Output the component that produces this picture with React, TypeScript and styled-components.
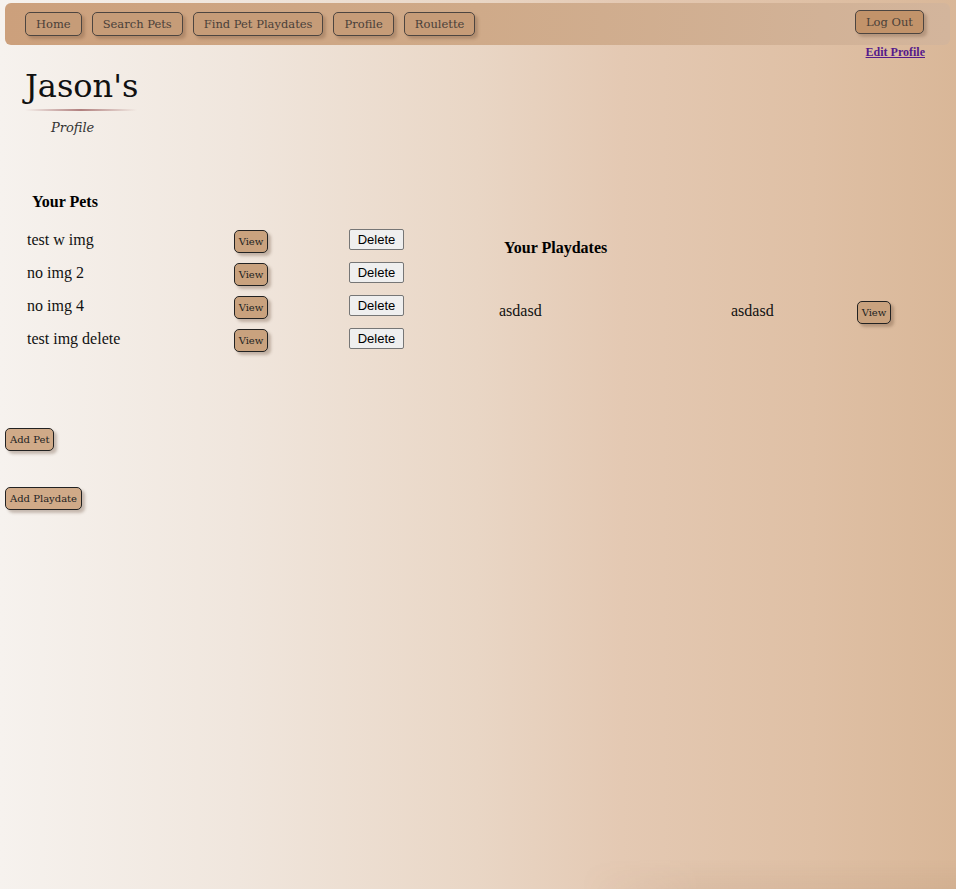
import React from "react";
import styled, { createGlobalStyle } from "styled-components";

const Global = createGlobalStyle`
  html, body { margin: 0; padding: 0; }
  body { font-family: "Liberation Serif", "Times New Roman", serif; }
`;

const Page = styled.div`
  min-height: 889px;
  box-sizing: border-box;
  padding-top: 3px;
  background: linear-gradient(90deg, #f6f2ee 0%, #f0e6dd 25%, #e9d6c5 50%, #e4c9b3 65%, #dfc0a5 85%, #d9b798 100%);
  position: relative;
  overflow: hidden;
`;

const BottomShade = styled.div`
  position: absolute;
  left: 580px;
  right: 0;
  bottom: 0;
  height: 30px;
  background: linear-gradient(180deg, rgba(120, 80, 50, 0) 0%, rgba(120, 80, 50, 0.07) 100%);
  -webkit-mask-image: linear-gradient(90deg, transparent 0%, black 120px);
  mask-image: linear-gradient(90deg, transparent 0%, black 120px);
  pointer-events: none;
`;

const Nav = styled.nav`
  margin: 0 6px 0 5px;
  height: 42px;
  border-radius: 6px;
  background: linear-gradient(90deg, #cca07c 0%, #cfaa89 50%, #d3b59c 100%);
  display: flex;
  align-items: center;
  padding: 0 26px 0 20px;
  gap: 10px;
  box-sizing: border-box;
`;

const NavButton = styled.button<{ $right?: boolean }>`
  font-family: "DejaVu Serif", "Liberation Serif", serif;
  font-size: 11.5px;
  color: #4a4038;
  height: 24px;
  padding: 0 10px;
  background: ${(p) => (p.$right ? "#c2936a" : "#c69c78")};
  border: 1px solid #4d4540;
  border-radius: 5px;
  box-shadow: 3px 3px 3px rgba(90, 60, 40, 0.25);
  margin-left: ${(p) => (p.$right ? "auto" : "0")};
  margin-top: ${(p) => (p.$right ? "-4px" : "0")};
  cursor: pointer;
`;

const EditRow = styled.div`
  display: flex;
  justify-content: flex-end;
  padding-right: 31px;
  height: 16px;
`;

const EditLink = styled.a`
  font-family: "Liberation Serif", serif;
  font-weight: bold;
  font-size: 12px;
  color: #551a8b;
  text-decoration: underline;
  line-height: 14px;
`;

const Header = styled.header`
  padding-left: 25px;
  margin-top: 5px;
  width: 112px;
`;

const Title = styled.h1`
  margin: 0;
  font-family: "DejaVu Serif", serif;
  font-weight: normal;
  font-size: 32px;
  color: #111;
  line-height: 40px;
  white-space: nowrap;
`;

const Rule = styled.div`
  height: 2px;
  margin-top: 3px;
  width: 112px;
  background: linear-gradient(90deg, rgba(160, 100, 90, 0) 0%, rgba(160, 100, 100, 0.8) 50%, rgba(160, 100, 90, 0) 100%);
`;

const Subtitle = styled.div`
  font-family: "DejaVu Serif", serif;
  font-style: italic;
  font-size: 13px;
  color: #333;
  margin-top: 9px;
  padding-left: 26px;
`;

const Content = styled.div`
  display: flex;
  margin-top: 57px;
`;

const PetsCol = styled.section`
  width: 499px;
`;

const SectionTitle = styled.h2<{ $indent: number }>`
  margin: 0;
  font-family: "Liberation Serif", serif;
  font-weight: bold;
  font-size: 16px;
  line-height: 20px;
  padding-left: ${(p) => p.$indent}px;
`;

const PetList = styled.div`
  margin-top: 13px;
  padding-left: 27px;
  display: grid;
  grid-template-columns: 207px 115px auto;
  grid-auto-rows: 33px;
  align-items: center;
`;

const ItemText = styled.span`
  font-family: "Liberation Serif", serif;
  font-size: 16px;
  color: #111;
  margin-top: -4px;
`;

const ViewButton = styled.button`
  font-family: "DejaVu Serif", serif;
  font-size: 10px;
  color: #222;
  width: 34px;
  height: 23px;
  padding: 0;
  background: #c9a27e;
  border: 1px solid #222;
  border-radius: 5px;
  box-shadow: 3px 3px 3px rgba(90, 60, 40, 0.3);
  justify-self: start;
`;

const DeleteButton = styled.button`
  font-family: "Liberation Sans", Arial, sans-serif;
  font-size: 13px;
  color: #000;
  width: 55px;
  height: 21px;
  padding: 0;
  background: #efefef;
  border: 1px solid #767676;
  border-radius: 2px;
  justify-self: start;
  margin-top: -4px;
`;

const PlaydatesCol = styled.section`
  padding-top: 46px;
  flex: 1;
`;

const PlayList = styled.div`
  margin-top: 38px;
  display: grid;
  grid-template-columns: 232px 126px auto;
  grid-auto-rows: 33px;
  align-items: center;
`;

const AddArea = styled.div`
  display: flex;
  flex-direction: column;
  align-items: flex-start;
  gap: 36px;
  margin-top: 71px;
  padding-left: 5px;
`;

const AddButton = styled.button`
  font-family: "DejaVu Serif", serif;
  font-size: 10px;
  color: #222;
  height: 23px;
  padding: 0 4px;
  background: #d0aa88;
  border: 1px solid #222;
  border-radius: 5px;
  box-shadow: 3px 3px 3px rgba(90, 60, 40, 0.3);
`;

const pets = ["test w img", "no img 2", "no img 4", "test img delete"];

export default function App() {
  return (
    <Page>
      <Global />
      <Nav>
        <NavButton>Home</NavButton>
        <NavButton>Search Pets</NavButton>
        <NavButton>Find Pet Playdates</NavButton>
        <NavButton>Profile</NavButton>
        <NavButton>Roulette</NavButton>
        <NavButton $right>Log Out</NavButton>
      </Nav>
      <EditRow>
        <EditLink href="#">Edit Profile</EditLink>
      </EditRow>
      <Header>
        <Title>Jason's</Title>
        <Rule />
        <Subtitle>Profile</Subtitle>
      </Header>
      <Content>
        <PetsCol>
          <SectionTitle $indent={32}>Your Pets</SectionTitle>
          <PetList>
            {pets.map((p) => (
              <React.Fragment key={p}>
                <ItemText>{p}</ItemText>
                <ViewButton>View</ViewButton>
                <DeleteButton>Delete</DeleteButton>
              </React.Fragment>
            ))}
          </PetList>
        </PetsCol>
        <PlaydatesCol>
          <SectionTitle $indent={5}>Your Playdates</SectionTitle>
          <PlayList>
            <ItemText>asdasd</ItemText>
            <ItemText>asdasd</ItemText>
            <ViewButton>View</ViewButton>
          </PlayList>
        </PlaydatesCol>
      </Content>
      <AddArea>
        <AddButton>Add Pet</AddButton>
        <AddButton>Add Playdate</AddButton>
      </AddArea>
      <BottomShade />
    </Page>
  );
}
